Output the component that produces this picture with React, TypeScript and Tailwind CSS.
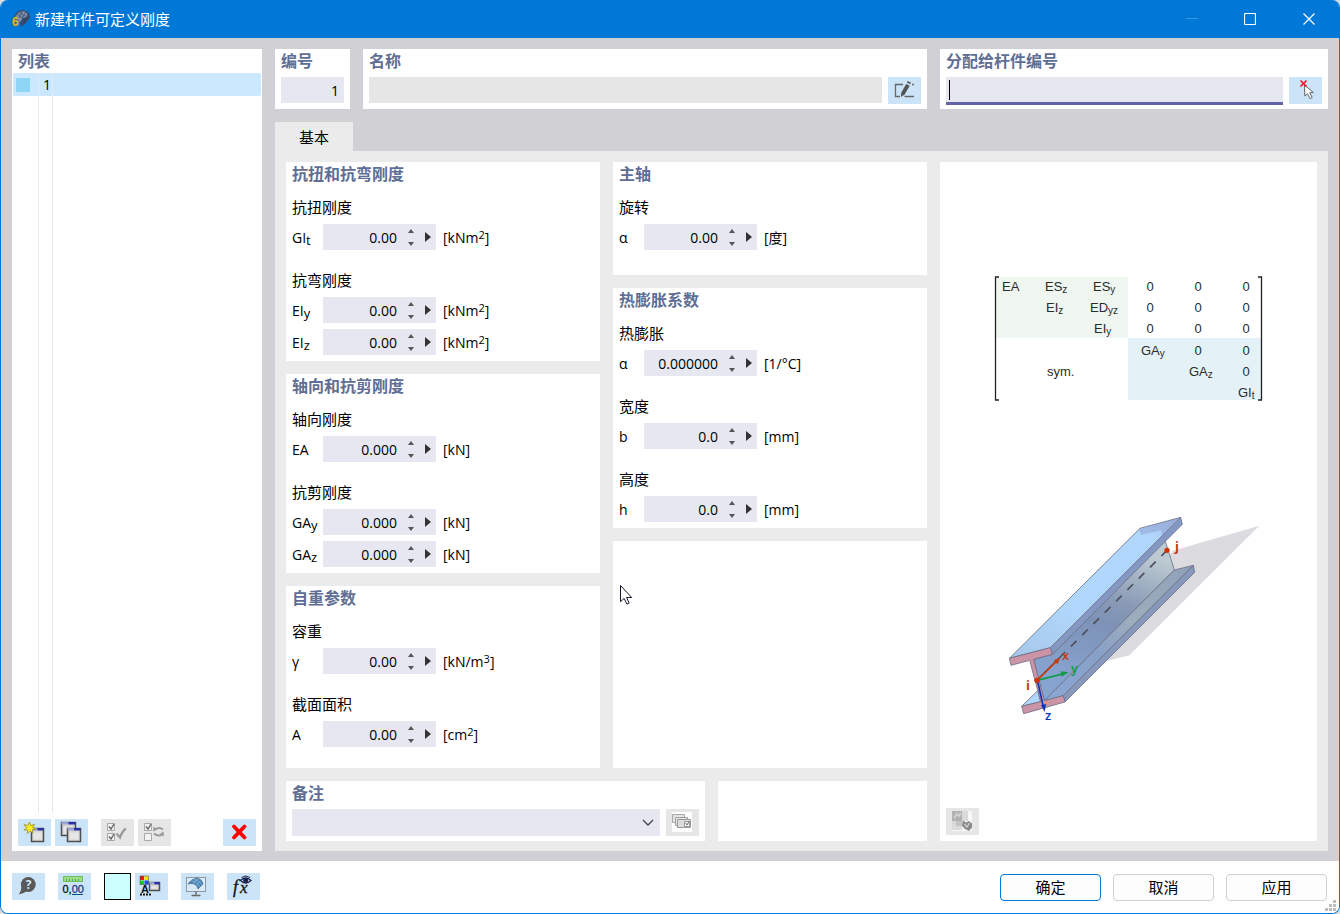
import React from "react";

type IconProps = { children: React.ReactNode };

function Icon({ children }: IconProps) {
  return (
    <svg width="33" height="27" viewBox="0 0 33 27" fill="none" className="block" aria-hidden="true">
      {children}
    </svg>
  );
}

function ToolButton({ label, disabled, children }: { label: string; disabled?: boolean; children: React.ReactNode }) {
  return (
    <button
      type="button"
      aria-label={label}
      disabled={disabled}
      className={`h-[27px] w-[33px] shrink-0 ${disabled ? "bg-[#e6e6e6]" : "bg-[#cce4f7]"}`}
    >
      <Icon>{children}</Icon>
    </button>
  );
}

function MiniWindow({ x, y, w, h }: { x: number; y: number; w: number; h: number }) {
  return (
    <g>
      <rect x={x} y={y} width={w} height={h} fill="#d6d6d6" stroke="#4f4f4f" strokeWidth="1.500" />
      <rect x={x} y={y - 0.5} width={w / 2} height="2.500" fill="#9aa2d6" />
      <rect x={x + w / 2} y={y - 0.5} width={w / 2} height="2.500" fill="#2b2fa8" />
      <rect x={x + 2} y={y + 4} width={w - 4} height={h - 6} fill="#e6e6e6" />
    </g>
  );
}

function Card({ title, className = "", children }: { title?: string; className?: string; children?: React.ReactNode }) {
  return (
    <section className={`bg-white px-1.5 pb-1.5 ${className}`}>
      {title && <h2 className="text-base leading-6 font-bold text-[#5e6e94]">{title}</h2>}
      {children}
    </section>
  );
}

function GroupLabel({ first, children }: { first?: boolean; children: React.ReactNode }) {
  return <h3 className={`mb-1.5 text-[15px] leading-[22px] ${first ? "mt-2.5" : "mt-[19px]"}`}>{children}</h3>;
}

type FieldProps = {
  id: string;
  symbol: string;
  sub?: string;
  value: string;
  unit: string;
  sup?: string;
  unitEnd?: string;
  narrow?: boolean;
  stacked?: boolean;
};

function Field({ id, symbol, sub, value, unit, sup, unitEnd = "]", narrow, stacked }: FieldProps) {
  return (
    <div className={`flex h-[26px] items-center text-sm ${stacked ? "mt-1.5" : ""}`}>
      <label htmlFor={id} className={`flex shrink-0 items-center pt-0.5 leading-6 ${narrow ? "w-[25px]" : "w-[31px]"}`}>
        {symbol}
        {sub && <span className="pt-[3px] text-[13px]">{sub}</span>}
      </label>
      <div className="flex h-full w-[113px] shrink-0 bg-[#e7e7f1]">
        <input id={id} defaultValue={value} className="h-full w-[74px] bg-transparent text-right outline-none" />
        <div className="flex w-7 flex-col">
          <button type="button" aria-label="增加" className="flex flex-1 items-center justify-center">
            <svg width="6" height="4" viewBox="0 0 6 4"><path d="M0 4 3 0l3 4z" fill="#555" /></svg>
          </button>
          <button type="button" aria-label="减少" className="flex flex-1 items-center justify-center">
            <svg width="6" height="4" viewBox="0 0 6 4"><path d="M0 0h6L3 4z" fill="#555" /></svg>
          </button>
        </div>
        <button type="button" aria-label="更多" className="flex items-center justify-center">
          <svg width="6" height="10" viewBox="0 0 6 10"><path d="M0 0 6 5 0 10z" fill="#333" /></svg>
        </button>
      </div>
      <span className="ml-[7px] flex pt-0.5 leading-6">
        {unit}
        {sup && <span className="text-[11px] leading-[18px]">{sup}</span>}
        {unitEnd}
      </span>
    </div>
  );
}

function MatrixText({ x, y, t, sub }: { x: number; y: number; t: string; sub?: string }) {
  return (
    <text x={x} y={y} fontSize="13">
      {t}
      {sub && <tspan dy="2" fontSize="10">{sub}</tspan>}
    </text>
  );
}

function StiffnessMatrix() {
  const zeros = [
    [156, 15], [204, 15], [252, 15],
    [156, 36], [204, 36], [252, 36],
    [156, 57], [204, 57], [252, 57],
    [204, 79], [252, 79], [252, 100],
  ];
  return (
    <svg width="269" height="125" viewBox="0 0 269 125" fill="#2b2b2b" className="shrink-0 font-['Liberation_Sans',sans-serif]">
      <rect x="2" y="1" width="132" height="61" fill="#eff5ef" />
      <rect x="134" y="62" width="133" height="62" fill="#e4f2f8" />
      <path d="M5 1H1.500V124H5M264 1h3.500V124H264" fill="none" stroke="#222" strokeWidth="1.300" />
      <MatrixText x={8} y={15} t="EA" />
      <MatrixText x={51} y={15} t="ES" sub="z" />
      <MatrixText x={99} y={15} t="ES" sub="y" />
      <MatrixText x={52} y={36} t="EI" sub="z" />
      <MatrixText x={96} y={36} t="ED" sub="yz" />
      <MatrixText x={100} y={57} t="EI" sub="y" />
      <MatrixText x={147} y={79} t="GA" sub="y" />
      <MatrixText x={195} y={100} t="GA" sub="z" />
      <MatrixText x={244} y={121} t="GI" sub="t" />
      <MatrixText x={53} y={100} t="sym." />
      {zeros.map(([x, y]) => (
        <text key={`${x}-${y}`} x={x} y={y} fontSize="13" textAnchor="middle">0</text>
      ))}
    </svg>
  );
}

function BeamDrawing() {
  return (
    <svg width="269" height="215" viewBox="0 0 269 215" className="shrink-0 font-['Open_Sans',sans-serif]">
      <defs>
        <linearGradient id="top" x1="0" y1="1" x2="1" y2="0">
          <stop offset="0" stopColor="#a5c6e8" />
          <stop offset="0.350" stopColor="#b0d6fb" />
          <stop offset="0.850" stopColor="#b0d6fb" />
          <stop offset="1" stopColor="#a3bbe6" />
        </linearGradient>
        <linearGradient id="web" gradientUnits="userSpaceOnUse" x1="300" y1="560" x2="420" y2="150">
          <stop offset="0" stopColor="#87a3cf" />
          <stop offset="0.450" stopColor="#7d92b6" />
          <stop offset="0.620" stopColor="#8799b5" />
          <stop offset="1" stopColor="#bdcbd2" />
        </linearGradient>
        <linearGradient id="foot" gradientUnits="userSpaceOnUse" x1="180" y1="600" x2="580" y2="200">
          <stop offset="0" stopColor="#8aa7d3" />
          <stop offset="0.350" stopColor="#87a0c7" />
          <stop offset="0.600" stopColor="#9dadbd" />
          <stop offset="1" stopColor="#91a2b8" />
        </linearGradient>
      </defs>
      <g transform="scale(0.33333) translate(-12 -30)" stroke="#6d7085" strokeWidth="2.500" strokeLinejoin="round">
        <path d="M548 152 808 77 418 466 235 513z" fill="#dcdbe0" stroke="none" />
        <path d="M95 619 143 572 152 605z" fill="#b0d6fb" />
        <path d="M131 478 187 463 525 120 553 210 163 602z" fill="url(#web)" />
        <path d="M163 602 553 210 610 196 220 587z" fill="url(#foot)" />
        <path d="M220 587 610 196 614 217 225 606z" fill="#8698bc" />
        <path d="M181 443 572 52 577 73 187 463z" fill="#8399c4" />
        <path d="M58 475 450 85 572 52 181 443z" fill="url(#top)" />
        <path d="M447 88 570 54 540 86 530 122 520 118 513 91 453 105z" fill="#8792c5" opacity=".4" stroke="none" />
        <path d="M58 475 181 443 187 463 131 478 163 602 220 587 225 606 101 641 95 619 152 605 119 481 63 496z" fill="#cb94a7" />
        <path d="M531 151 222 460" stroke="#4d4d5c" strokeWidth="5" strokeDasharray="24 24" />
        <path d="M222 460 141 541" stroke="#4d4d5c" strokeWidth="4" />
        <path d="M141 541 200 483" stroke="#c63a0c" strokeWidth="5" />
        <path d="M210 473 203 493 191 481z" fill="#c63a0c" stroke="none" />
        <path d="M141 541 222 521" stroke="#139b48" strokeWidth="5" />
        <path d="M236 517 215 530 212 514z" fill="#139b48" stroke="none" />
        <path d="M143 545 160 620" stroke="#0a36bd" strokeWidth="5" />
        <path d="M164 636 153 616 168 612z" fill="#0a36bd" stroke="none" />
        <circle cx="531" cy="151" r="8" fill="#d03303" stroke="none" />
        <circle cx="141" cy="541" r="8" fill="#d03303" stroke="none" />
      </g>
      <g fontSize="13">
        <text x="181" y="41" fill="#c63a0c" fontWeight="700">j</text>
        <text x="32" y="180" fill="#c63a0c" fontWeight="700">i</text>
        <text x="68" y="150" fill="#c63a0c" fontWeight="600">x</text>
        <text x="77" y="163" fill="#139b48" fontWeight="600">y</text>
        <text x="51" y="210" fill="#0a36bd" fontWeight="600">z</text>
      </g>
    </svg>
  );
}

function AppLogo() {
  return (
    <svg width="20" height="20" viewBox="0 0 20 20" aria-hidden="true">
      <path d="M3 8 7 2l6-1 5 3 1 5-5 6-4 3-1-6z" fill="#3a4a66" />
      <path d="M4 8 8 3l5-1 4 3-1 3-4 1-3 4z" fill="#8292b5" />
      <path d="m6 5 6 4M8 3l6 4M12 1l-4 8M15 2l-4 8M17 4l-4 10M12 11l6-3" stroke="#34435c" strokeWidth=".7" />
      <text x="1" y="17" fontSize="12" fontWeight="700" fill="#e3b83a" stroke="#6b5618" strokeWidth=".7" className="[paint-order:stroke] font-['Liberation_Sans',sans-serif]">6</text>
    </svg>
  );
}

function TitleBar() {
  return (
    <header className="flex h-[38px] shrink-0 items-center bg-[#0078d7] pl-2.5 text-white">
      <AppLogo />
      <h1 className="ml-1 flex-1 text-[15px]">新建杆件可定义刚度</h1>
      <button type="button" aria-label="最小化" disabled className="flex h-full w-[58px] items-center justify-center">
        <svg width="12" height="12" viewBox="0 0 12 12"><path d="M0 5.500h12" stroke="#3d98e2" /></svg>
      </button>
      <button type="button" aria-label="最大化" className="flex h-full w-[58px] items-center justify-center">
        <svg width="12" height="12" viewBox="0 0 12 12" fill="none"><rect x=".5" y=".5" width="11" height="11" rx="1" stroke="#fff" strokeWidth="1.200" /></svg>
      </button>
      <button type="button" aria-label="关闭" className="flex h-full w-[60px] items-center justify-center">
        <svg width="12" height="12" viewBox="0 0 12 12"><path d="m.5.5 11 11m0-11-11 11" stroke="#fff" strokeWidth="1.200" /></svg>
      </button>
    </header>
  );
}

function ListPanel() {
  return (
    <aside className="flex w-[250px] shrink-0 flex-col bg-white">
      <h2 className="pl-1.5 text-base leading-6 font-bold text-[#5e6e94]">列表</h2>
      <div className="flex flex-1 flex-col px-px">
        <button type="button" className="flex h-[23px] w-full rounded-xs bg-[#cce8ff] text-left text-sm">
          <span className="flex h-full w-[26px] items-center border-r border-[#e6e9ee] pl-[3px]">
            <span className="size-3.5 bg-[#8ed5f5]" />
          </span>
          <span className="h-full w-3.5 border-r border-[#e6e9ee] pl-1 leading-6">1</span>
        </button>
        <div className="flex flex-1">
          <div className="w-[26px] border-r border-[#e8e8ea]" />
          <div className="w-3.5 border-r border-[#e8e8ea]" />
        </div>
      </div>
      <div className="mt-[6px] flex px-1.5 pb-[5px]">
        <ToolButton label="新建">
          <MiniWindow x={13.5} y={9.5} w={12} h={13} />
          <path d="m11.500 3 1.300 3.800L16.500 5l-1.700 3.600 3.200 1.500-3.600.7.500 3.200-3-2-2.600 2.500.4-3.600L6 11l2.700-2L6 5.500l3.800 1z" fill="#ffec1f" stroke="#8a8128" strokeWidth=".7" />
        </ToolButton>
        <div className="w-1" />
        <ToolButton label="复制">
          <MiniWindow x={6.5} y={3.5} w={14} h={13} />
          <MiniWindow x={12.5} y={9.5} w={13} h={13} />
        </ToolButton>
        <div className="w-[13px]" />
        <ToolButton label="全选" disabled>
          <path d="M6.500 4.500h7v7h-7zM6.500 14.500h7v7h-7z" fill="#f2f2f2" stroke="#a9a9a9" />
          <path d="m8 7.500 2 2.500 3-5M8 17.500l2 2.500 3-5" stroke="#666" strokeWidth="1.400" />
          <path d="m15.500 14.500 3.500 4q2-6 6-9" stroke="#9a9a9a" strokeWidth="2.200" />
        </ToolButton>
        <div className="w-1" />
        <ToolButton label="反选" disabled>
          <path d="M6.500 4.500h7v7h-7zM6.500 14.500h7v7h-7z" fill="#f2f2f2" stroke="#a9a9a9" />
          <path d="m8 7.500 2 2.500 3-5" stroke="#666" strokeWidth="1.400" />
          <path d="M17 10.500q4-3 8 0M16 14.500q4 3.500 8 1" stroke="#9a9a9a" strokeWidth="1.800" />
          <path d="m15 12.500.5-5 4 3zM26 12.500l-.5 5-4-2.500z" fill="#9a9a9a" />
        </ToolButton>
        <div className="flex-1" />
        <ToolButton label="删除">
          <path d="m11 7.500 10.500 11M21.500 7.500 11 18.500" stroke="#fe0000" strokeWidth="3.800" strokeLinecap="round" />
        </ToolButton>
      </div>
    </aside>
  );
}

function HeaderCards() {
  return (
    <div className="flex gap-[13px]">
      <section className="h-[60px] w-[75px] shrink-0 bg-white px-1.5">
        <label htmlFor="number" className="block text-base leading-6 font-bold text-[#5e6e94]">编号</label>
        <input id="number" defaultValue="1" className="mt-1 block h-[26px] w-full bg-[#e7e7f1] px-[5px] text-right text-sm outline-none" />
      </section>
      <section className="h-[60px] flex-1 bg-white px-1.5">
        <label htmlFor="name" className="block text-base leading-6 font-bold text-[#5e6e94]">名称</label>
        <div className="mt-1 flex gap-1.5">
          <input id="name" readOnly className="h-[26px] min-w-0 flex-1 bg-[#e6e6e6] px-1.5 text-sm outline-none" />
          <ToolButton label="编辑名称">
            <path d="M15 7.500H7.500v12H12M16.500 19.500H26M24 7.500h2" stroke="#666" strokeWidth="1.300" />
            <path d="m18.200 7 3.500 1.800-5 8.700-3.700 2.500.2-4.300zM18.900 5.500l.8-1.500 3.300 1.700-.8 1.600z" fill="#555" />
          </ToolButton>
        </div>
      </section>
      <section className="h-[60px] w-[388px] shrink-0 bg-white px-1.5">
        <label htmlFor="assign" className="block text-base leading-6 font-bold text-[#5e6e94]">分配给杆件编号</label>
        <div className="mt-1 flex gap-1.5">
          <div className="flex h-7 min-w-0 flex-1 items-center border-b-3 border-[#6264a7] bg-[#e7e7f1] pl-[3px]">
            <span className="h-5 w-px bg-black" />
            <input id="assign" className="h-full min-w-0 flex-1 bg-transparent text-sm caret-transparent outline-none" />
          </div>
          <ToolButton label="选择杆件">
            <path d="m15.500 8 .3 11 2.600-2.300 2.600 5 2.200-1.200-2.500-4.700 3.600-.3z" fill="#fff" stroke="#666" />
            <path d="m11.500 3.500 6 6m0-6-6 6" stroke="#ed1c24" strokeWidth="1.700" />
          </ToolButton>
        </div>
      </section>
    </div>
  );
}

function MainPanel() {
  return (
    <div className="flex flex-1 gap-[13px] bg-[#ebebeb] px-[11px] pt-[11px] pb-2.5">
      <div className="flex min-w-0 flex-1 flex-col gap-[13px]">
        <div className="flex flex-1 gap-[13px]">
          <div className="flex flex-1 flex-col gap-[13px]">
            <Card title="抗扭和抗弯刚度">
              <GroupLabel first>抗扭刚度</GroupLabel>
              <Field id="git" symbol="GI" sub="t" value="0.00" unit="[kNm" sup="2" />
              <GroupLabel>抗弯刚度</GroupLabel>
              <Field id="eiy" symbol="EI" sub="y" value="0.00" unit="[kNm" sup="2" />
              <Field id="eiz" symbol="EI" sub="z" value="0.00" unit="[kNm" sup="2" stacked />
            </Card>
            <Card title="轴向和抗剪刚度">
              <GroupLabel first>轴向刚度</GroupLabel>
              <Field id="ea" symbol="EA" value="0.000" unit="[kN" />
              <GroupLabel>抗剪刚度</GroupLabel>
              <Field id="gay" symbol="GA" sub="y" value="0.000" unit="[kN" />
              <Field id="gaz" symbol="GA" sub="z" value="0.000" unit="[kN" stacked />
            </Card>
            <Card title="自重参数" className="flex-1">
              <GroupLabel first>容重</GroupLabel>
              <Field id="gamma" symbol="γ" value="0.00" unit="[kN/m" sup="3" />
              <GroupLabel>截面面积</GroupLabel>
              <Field id="area" symbol="A" value="0.00" unit="[cm" sup="2" />
            </Card>
          </div>
          <div className="flex flex-1 flex-col gap-[13px]">
            <Card title="主轴" className="h-[113px]">
              <GroupLabel first>旋转</GroupLabel>
              <Field id="rotation" symbol="α" value="0.00" unit="[度" narrow />
            </Card>
            <Card title="热膨胀系数">
              <GroupLabel first>热膨胀</GroupLabel>
              <Field id="thermal" symbol="α" value="0.000000" unit="[1/°C" narrow />
              <GroupLabel>宽度</GroupLabel>
              <Field id="width" symbol="b" value="0.0" unit="[mm" narrow />
              <GroupLabel>高度</GroupLabel>
              <Field id="height" symbol="h" value="0.0" unit="[mm" narrow />
            </Card>
            <Card className="relative flex-1">
              <svg width="13" height="20" viewBox="0 0 13 20" className="absolute top-11 left-[7px]" aria-hidden="true">
                <path d="M.5.500v16.200l3.600-3.300 2.800 5.700 2.300-1.100-2.700-5.500h5.200z" fill="#fff" stroke="#15152a" />
              </svg>
            </Card>
          </div>
        </div>
        <div className="flex gap-[13px]">
          <section className="h-[60px] flex-1 bg-white px-1.5">
            <label htmlFor="comment" className="block text-base leading-6 font-bold text-[#5e6e94]">备注</label>
            <div className="mt-1 flex gap-1.5">
              <div className="relative min-w-0 flex-1">
                <select id="comment" className="h-[27px] w-full appearance-none bg-[#e7e7f1] px-1.5 text-sm outline-none">
                  <option></option>
                </select>
                <svg width="12" height="8" viewBox="0 0 12 8" fill="none" className="pointer-events-none absolute top-2.5 right-1.5">
                  <path d="m1 1 5 5 5-5" stroke="#444" strokeWidth="1.300" />
                </svg>
              </div>
              <ToolButton label="备注模板" disabled>
                <path fill="#fff" d="M6 3h20v20H6z" />
                <path d="M6.500 5.500h12v8h-12z" fill="#e4e4e4" stroke="#a8a8a8" />
                <path d="M9.500 8.500h12v8h-12z" fill="#e4e4e4" stroke="#a0a0a0" />
                <path d="M11.500 10.500h13v8h-13z" fill="#dcdcdc" stroke="#999" />
                <path d="M18.500 12.500h5v5h-5z" fill="#f5f5f5" stroke="#999" />
                <path d="m19.500 14 1.500 2 2-3.500" stroke="#777" />
              </ToolButton>
            </div>
          </section>
          <section className="h-[60px] w-[209px] shrink-0 bg-white" />
        </div>
      </div>
      <section className="flex w-[377px] shrink-0 flex-col items-center bg-white pt-[114px] pb-1.5">
        <StiffnessMatrix />
        <div className="h-[109px] shrink-0" />
        <BeamDrawing />
        <div className="mt-auto flex self-start pl-1.5">
          <ToolButton label="图片设置" disabled>
            <path fill="#f7f7f7" d="M6 3h20v20H6z" />
            <path fill="#b2b2b2" d="M6 3h10v10H6z" />
            <path d="m8 10 3-4 2 2 2-3" stroke="#d6d6d6" strokeWidth="1.500" />
            <path fill="#dadada" d="M16 3h6v10h-6zM6 13h10v9H6z" />
            <path fill="#c4c4c4" d="M10 13h9v5h-9z" />
            <path d="m17 13 3 1.500 3-1.500 3 2.500v4l-3 3.500-4-2-3-3z" fill="#8c8c8c" />
            <path d="m18.500 16 2.500 3 2.500-4" stroke="#d0d0d0" strokeWidth="1.300" />
          </ToolButton>
        </div>
      </section>
    </div>
  );
}

function DialogButton({ primary, children }: { primary?: boolean; children: React.ReactNode }) {
  return (
    <button
      type="button"
      className={`h-[27px] w-[101px] rounded-sm border bg-[#fdfdfd] text-[15px] leading-[25px] ${primary ? "border-[#0078d7]" : "border-[#d0d0d0]"}`}
    >
      {children}
    </button>
  );
}

function Footer() {
  return (
    <footer className="relative flex h-[52px] shrink-0 items-start bg-white pt-3 pr-3 pl-[11px]">
      <div className="flex flex-1 gap-[13px]">
        <ToolButton label="帮助">
          <circle cx="16.300" cy="11.500" r="7.400" fill="#595959" />
          <path d="M9.500 13Q9.500 18 6.500 21.500 12 20.500 15 18z" fill="#595959" />
          <text x="16.500" y="16" fontSize="12" fontWeight="700" textAnchor="middle" fill="#cce4f7" className="font-['Open_Sans',sans-serif]">?</text>
        </ToolButton>
        <ToolButton label="单位和小数位">
          <rect x="5.500" y="3.500" width="19" height="5" fill="#9bdc88" stroke="#6fbf5e" />
          <path d="M8.500 6v2M11.500 6v2M14.500 6v2M17.500 6v2M20.500 6v2" stroke="#5aa44c" />
          <text x="4.500" y="19.500" fontSize="11" fill="#111" stroke="#111" strokeWidth=".3" className="font-['Liberation_Sans',sans-serif]">
            0,<tspan fill="#1d3e8a" stroke="#1d3e8a">00</tspan>
          </text>
          <path d="M14 21.500h11" stroke="#1d3e8a" />
        </ToolButton>
        <div className="flex gap-1">
          <button type="button" aria-label="颜色" className="size-[27px] border border-black bg-[#ccffff]" />
          <ToolButton label="显示属性">
            <path fill="#f01818" d="M5 3h4v4H5z" />
            <path fill="#ffe100" d="M9.500 3h4v4h-4z" />
            <path fill="#16d416" d="M5 7.500h4v4H5z" />
            <path fill="#1c4df0" d="M9.500 7.500h4v4h-4z" />
            <path d="M5 3h8.500v8.500H5z" stroke="#444" strokeWidth=".5" />
            <text x="6" y="20" fontSize="11" fontWeight="700" fill="#111" className="font-['Liberation_Sans',sans-serif]">A</text>
            <path d="M5 21.500h11" stroke="#111" strokeWidth="2" strokeDasharray="2 1" />
            <MiniWindow x={14.500} y={9.500} w={10} h={8} />
          </ToolButton>
        </div>
        <ToolButton label="视图">
          <rect x="5.500" y="4.500" width="19" height="14" stroke="#8b98a4" fill="#d8eaf7" />
          <path d="M15 18.500v3M10.500 22.500h9" stroke="#666" strokeWidth="1.500" />
          <path d="M7 11q3-5 9-6 5 1 6 6l-5 5q-1-4-4-5-3-1-6 0z" fill="#4581b5" stroke="#376489" strokeWidth=".6" />
          <path d="M10 8q6 0 9 6M13 6q5 1 8 6M12 11q2-4 6-5M15 13q1-3 5-5" stroke="#a6cbe6" strokeWidth=".6" />
        </ToolButton>
        <ToolButton label="公式">
          <text x="6" y="20" fontSize="18" fontStyle="italic" fill="#111" stroke="#111" strokeWidth=".3" className="font-['Liberation_Serif',serif]">f</text>
          <text x="13" y="20" fontSize="17" fontStyle="italic" fill="#111" stroke="#111" strokeWidth=".3" className="font-['Liberation_Serif',serif]">x</text>
          <path d="M13.500 7.500q5-5 10.500 0-5.500 5-10.500 0z" fill="#dce9fa" stroke="#18224f" strokeWidth="1.300" />
          <circle cx="18.700" cy="7.300" r="2.500" fill="#18224f" />
          <path d="M14.500 4.500q4-3 8.500 0" stroke="#18224f" />
        </ToolButton>
      </div>
      <div className="flex gap-3 pt-px">
        <DialogButton primary>确定</DialogButton>
        <DialogButton>取消</DialogButton>
        <DialogButton>应用</DialogButton>
      </div>
      <svg width="11" height="11" viewBox="0 0 11 11" fill="#bdbdbd" className="absolute right-[3px] bottom-0.5" aria-hidden="true">
        <path d="M8 0h3v3H8zM4 4h3v3H4zM8 4h3v3H8zM0 8h3v3H0zM4 8h3v3H4zM8 8h3v3H8z" />
      </svg>
    </footer>
  );
}

export default function App() {
  return (
    <div className="flex min-h-screen bg-[#d8dde2] font-['Open_Sans','Noto_Sans_CJK_SC',sans-serif] text-black">
      <div className="flex flex-1 flex-col overflow-hidden rounded-lg border border-t-0 border-[#0078d7]">
        <TitleBar />
        <main className="flex flex-1 gap-[13px] bg-[#d1d0d5] px-[11px] pt-[11px] pb-2.5">
          <ListPanel />
          <div className="flex min-w-0 flex-1 flex-col">
            <HeaderCards />
            <div role="tablist" className="mt-[13px] flex">
              <button type="button" role="tab" aria-selected="true" className="h-[29px] w-[78px] bg-[#ebebeb] pt-0.5 text-[15px]">
                基本
              </button>
            </div>
            <MainPanel />
          </div>
        </main>
        <Footer />
      </div>
    </div>
  );
}
